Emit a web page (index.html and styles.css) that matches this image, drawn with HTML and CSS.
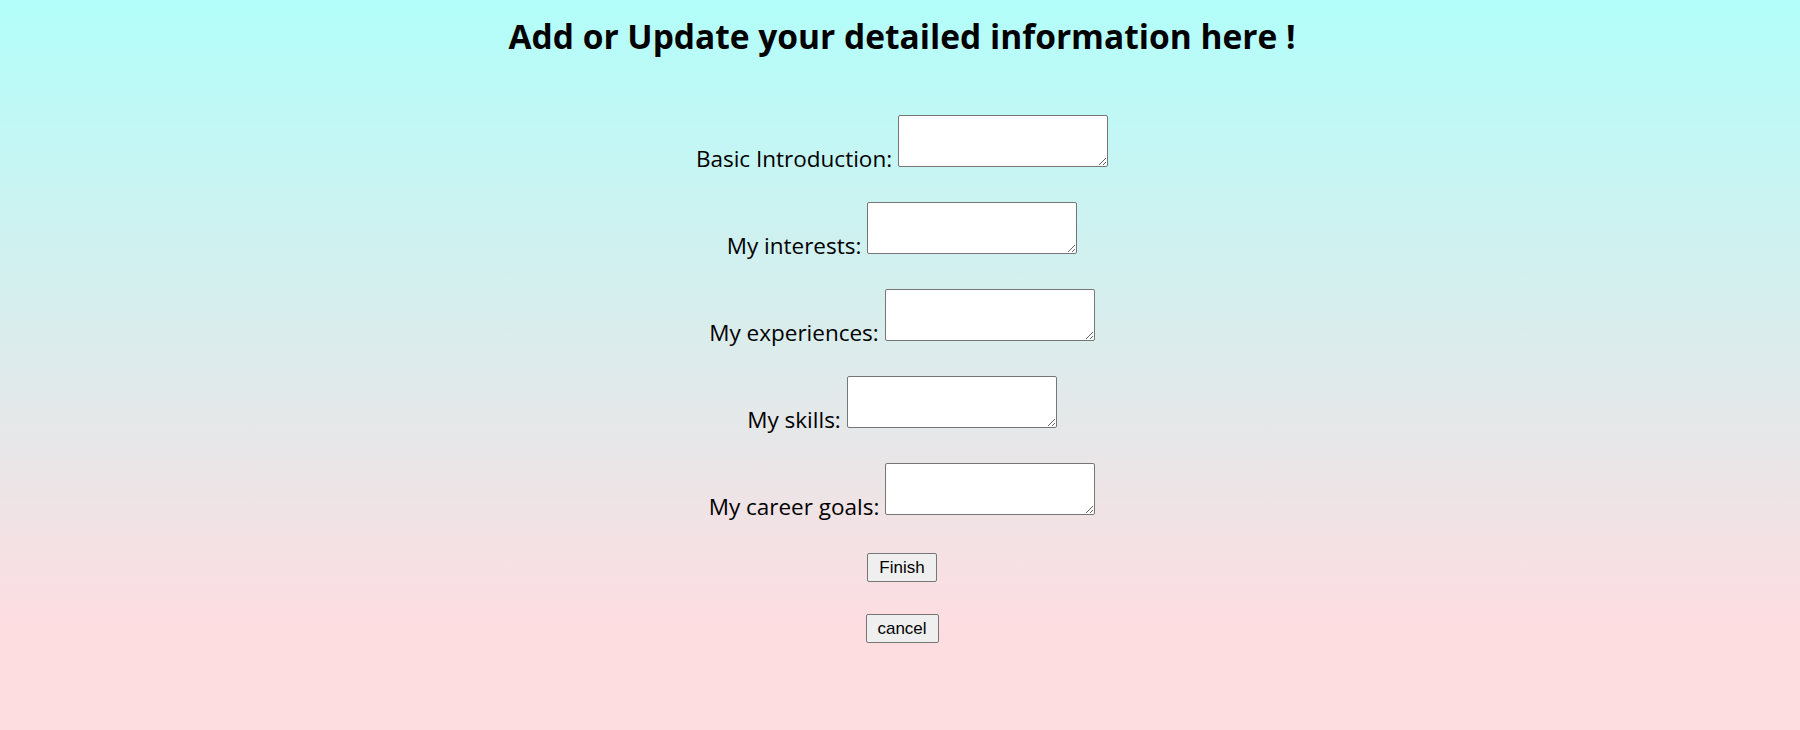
FILE: index.html
```html
<!DOCTYPE html>
<html lang="en">
<head>
<meta charset="utf-8">
<title>Update information</title>
<link rel="stylesheet" href="styles.css">
</head>
<body>
<h1 class="title">Add or Update your detailed information here !</h1>
<form class="info-form">
  <div class="row"><label class="label" for="intro">Basic Introduction:</label><textarea id="intro" class="field"></textarea></div>
  <div class="row"><label class="label" for="interests">My interests:</label><textarea id="interests" class="field"></textarea></div>
  <div class="row"><label class="label" for="exp">My experiences:</label><textarea id="exp" class="field"></textarea></div>
  <div class="row"><label class="label" for="skills">My skills:</label><textarea id="skills" class="field"></textarea></div>
  <div class="row"><label class="label" for="goals">My career goals:</label><textarea id="goals" class="field"></textarea></div>
  <button type="button" class="btn btn-finish">Finish</button>
  <button type="button" class="btn btn-cancel">cancel</button>
</form>
</body>
</html>
```
FILE: styles.css
```css
html {
  background: #fedde1;
}
body {
  margin: 0;
  min-height: 730px;
  background: linear-gradient(to bottom, #b2fefa 0px, #fedde1 630px, #fedde1 100%);
  font-family: "Open Sans", "Noto Sans", sans-serif;
  color: #000;
}
.title {
  margin: 0;
  padding-top: 13px;
  padding-left: 4px;
  text-align: center;
  font-size: 33.5px;
  font-weight: 700;
  line-height: 46px;
}
.info-form {
  display: flex;
  flex-direction: column;
  align-items: center;
  padding-top: 56px;
  padding-left: 4px;
}
.row {
  display: flex;
  align-items: flex-end;
  gap: 6px;
  margin-bottom: 35px;
}
.label {
  font-size: 22.5px;
  line-height: 24px;
  margin-bottom: -4px;
}
.field {
  box-sizing: border-box;
  width: 210px;
  height: 52px;
  margin: 0;
  border: 1px solid #767676;
  border-radius: 2px;
  background: #fff;
}
.btn {
  box-sizing: border-box;
  height: 29px;
  font-family: "Liberation Sans", Arial, sans-serif;
  font-size: 17px;
  border: 1px solid #767676;
  border-radius: 2px;
  background: #efefef;
  color: #000;
  padding: 0;
}
.btn-finish {
  width: 70px;
  margin-top: 3px;
}
.btn-cancel {
  width: 73px;
  margin-top: 32px;
}
```
